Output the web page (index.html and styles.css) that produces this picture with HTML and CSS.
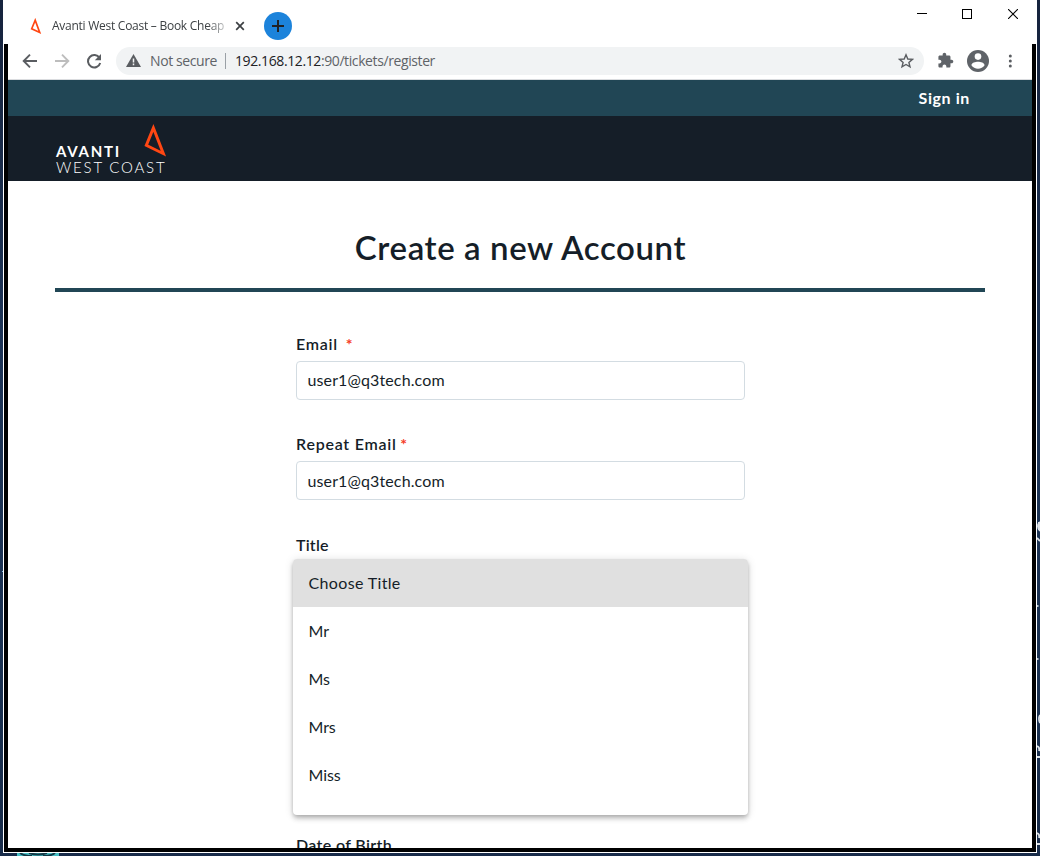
FILE: index.html
```html
<!DOCTYPE html>
<html lang="en">
<head>
<meta charset="utf-8">
<title>Avanti West Coast – Book Cheap Tickets</title>
<link rel="stylesheet" href="styles.css">
</head>
<body>
<div class="desktop">
  <svg class="desk-edge" width="3" height="336" viewBox="0 0 3 336"><g fill="none" stroke="#dde2e8" stroke-width="1.8"><path d="M3 2Q-1 6 3 11M0 18l3 3M3 195Q1 199 3 203M0 226q3 1 2 5M0 237h3M0 313q3 1 2 5M0 324h3"/></g><path fill="#dde2e8" d="M1 2h2v8H1z"/><path fill="#b8c5d2" d="M0 85h1.5v2H0zM0 138h1.5v2H0z"/></svg>
  <span class="spark"></span>
  <svg class="desk-icon" width="42" height="3" viewBox="0 0 42 3"><path fill="#48bfc4" d="M0 0h42v3H0z"/><path d="M3 0c4 3 8 3 12 3M38 0c-4 3-8 3-12 3M12 0q9 3 18 0" fill="none" stroke="#123845" stroke-width="2"/></svg>
  <div class="window">
    <header class="tabstrip">
      <div class="tab">
        <svg class="favicon" width="12" height="16" viewBox="0 0 12 16"><path d="M5.2 2.2 1.7 10.7 9.7 14.4z" fill="none" stroke="#ff4713" stroke-width="1.7"/></svg>
        <span class="tab-title">Avanti West Coast – Book Cheap</span>
        <svg class="tab-close" width="10" height="10" viewBox="0 0 10 10"><path d="M1.2 1.2l7.6 7.6M8.8 1.2 1.2 8.8" stroke="#3c4043" stroke-width="1.7"/></svg>
      </div>
      <div class="new-tab"><svg width="14" height="14" viewBox="0 0 14 14"><path d="M7 1v12M1 7h12" stroke="#202124" stroke-width="2"/></svg></div>
      <div class="controls">
        <svg class="minimize" width="10" height="10" viewBox="0 0 10 10" shape-rendering="crispEdges"><path d="M0 4.5h10" stroke="#000"/></svg>
        <svg width="10" height="10" viewBox="0 0 10 10" shape-rendering="crispEdges"><path d="M.5.5h9v9h-9z" fill="none" stroke="#000"/></svg>
        <svg width="10" height="10" viewBox="0 0 10 10"><path d="M0 0l10 10M10 0 0 10" stroke="#000" stroke-width="1.1"/></svg>
      </div>
    </header>
    <div class="frame">
      <nav class="toolbar">
        <svg class="nav-icon" width="16" height="16" viewBox="0 0 16 16"><path d="M15 8H2M8 1.7 1.7 8 8 14.3" fill="none" stroke="#5a5d61" stroke-width="1.9"/></svg>
        <svg class="nav-icon" width="16" height="16" viewBox="0 0 16 16"><path d="M1 8h13M8 1.7 14.3 8 8 14.3" fill="none" stroke="#bdbdbd" stroke-width="1.9"/></svg>
        <svg class="nav-icon" width="16" height="16" viewBox="0 0 16 16"><path d="M13.5 5A6.2 6.2 0 1 0 14.2 10" fill="none" stroke="#5a5d61" stroke-width="2"/><path d="M15 1v6.2H8.8z" fill="#5a5d61"/></svg>
        <div class="omnibox">
          <svg width="15" height="13" viewBox="0 0 15 13"><path d="M7.5 0 15 13H0z" fill="#5a5d61"/><path d="M7.5 4.5v4M7.5 9.6v1.6" stroke="#f1f3f4" stroke-width="1.5"/></svg>
          <span class="secure">Not secure</span>
          <span class="divider"></span>
          <span class="url">192.168.12.12<span class="path">:90/tickets/register</span></span>
          <svg class="star" width="16" height="16" viewBox="0 0 16 16"><path d="M8 1.8 9.8 6 14.4 6.4 10.9 9.4 12 13.9 8 11.5 4 13.9 5.1 9.4 1.6 6.4 6.2 6z" fill="none" stroke="#5a5d61" stroke-width="1.4"/></svg>
        </div>
        <svg class="puzzle" width="17" height="17" viewBox="0 0 24 24"><path fill="#5f6368" d="M20.5 11H19V7c0-1.1-.9-2-2-2h-4V3.5C13 2.12 11.88 1 10.5 1S8 2.12 8 3.5V5H4c-1.1 0-1.99.9-1.99 2v3.8H3.5c1.49 0 2.7 1.21 2.7 2.7s-1.21 2.7-2.7 2.7H2V20c0 1.1.9 2 2 2h3.8v-1.5c0-1.49 1.21-2.7 2.7-2.7s2.7 1.21 2.7 2.7V22H17c1.1 0 2-.9 2-2v-4h1.5c1.38 0 2.5-1.12 2.5-2.5S21.88 11 20.5 11z"/></svg>
        <svg class="avatar" width="22" height="22" viewBox="0 0 22 22"><circle cx="11" cy="11" r="11" fill="#5f6368"/><circle cx="11" cy="6.6" r="3.3" fill="#fff"/><path d="M4.4 15.2c0-2.4 4.1-3.5 6.6-3.5s6.6 1.1 6.6 3.5a7.9 7.9 0 0 1-13.2 0z" fill="#fff"/></svg>
        <svg class="kebab" width="4" height="14" viewBox="0 0 4 14"><g fill="#5a5d61"><circle cx="2.3" cy="2" r="1.5"/><circle cx="2.3" cy="7" r="1.5"/><circle cx="2.3" cy="12" r="1.5"/></g></svg>
      </nav>
      <div class="signin-bar"><a class="signin">Sign in</a></div>
      <div class="brand-bar">
        <div class="brand">
          <div class="brand-top"><span class="avanti">AVANTI</span><svg width="24" height="34" viewBox="0 0 24 34"><path d="M10.4 4.9 3.3 22.4 20.4 30.7z" fill="none" stroke="#ff4713" stroke-width="2.9"/></svg></div>
          <div class="west">WEST COAST</div>
        </div>
      </div>
      <main class="page">
        <h1 class="heading">Create a new Account</h1>
        <form class="form">
          <div class="field"><label class="label email">Email <b class="star-req">*</b></label><div class="input first">user1@q3tech.com</div></div>
          <div class="field"><label class="label repeat">Repeat Email <b class="star-req">*</b></label><div class="input">user1@q3tech.com</div></div>
          <div class="field"><label class="label title-label">Title</label>
            <div class="menu">
              <div class="option selected">Choose Title</div>
              <div class="option">Mr</div>
              <div class="option">Ms</div>
              <div class="option">Mrs</div>
              <div class="option">Miss</div>
            </div>
          </div>
          <label class="label dob">Date of Birth</label>
        </form>
      </main>
    </div>
  </div>
</div>
</body>
</html>
```
FILE: styles.css
```css
* { box-sizing: border-box; }
body { margin: 0; overflow: hidden; }
svg { display: block; flex: none; }
.desktop { position: relative; width: 1040px; height: 856px; padding: 0 3px 3px; background: linear-gradient(#16233d, #1d3457 40%, #1a3151 80%, #182b49); overflow: hidden; white-space: nowrap; }
.window { position: relative; height: 853px; background: #fff; padding: 0 1px 1px; }
.desk-edge { position: absolute; left: 1037px; top: 520px; }
.spark { position: absolute; left: 2px; top: 571px; width: 1px; height: 1px; background: #83bbe0; }
.desk-icon { position: absolute; left: 17px; top: 853px; }

.tabstrip { display: flex; align-items: center; height: 44px; padding: 8px 14px 0 26px; }
.tab { display: flex; align-items: center; width: 216px; }
.favicon { margin-right: 10px; }
.tab-title { width: 173px; overflow: hidden; font: 12px/16px "Open Sans", sans-serif; letter-spacing: -.26px; color: #3c4043; -webkit-mask-image: linear-gradient(90deg, #000 155px, transparent 180px); mask-image: linear-gradient(90deg, #000 155px, transparent 180px); }
.tab-close { margin-left: 10px; }
.new-tab { display: flex; align-items: center; justify-content: center; width: 28px; height: 28px; margin-left: 18px; border-radius: 50%; background: #1c83db; }
.controls { display: flex; gap: 36px; margin: -25px 4px 0 auto; }
.minimize { margin-right: -1px; }

.frame { height: 808px; border: solid #000; border-width: 0 4px 4px; overflow: hidden; }
.toolbar { display: flex; align-items: center; height: 36px; padding: 0 20px 2px 14px; border-bottom: 1px solid #dadcdf; }
.nav-icon { margin-right: 16px; }
.omnibox { display: flex; flex: none; align-items: center; width: 808px; height: 28px; margin-left: -2px; padding: 0 10px; border-radius: 14px; background: #f1f3f4; font: 14px/20px "Open Sans", sans-serif; color: #202124; }
.secure { width: 67px; margin-left: 9px; color: #5f6368; letter-spacing: -.4px; }
.divider { width: 1px; height: 16px; margin: 0 9px 0 8px; background: #9aa0a6; }
.url { letter-spacing: -.4px; }
.path { color: #5f6368; }
.star { margin-left: auto; }
.puzzle { margin-left: 13px; }
.avatar { margin-left: 13px; }
.kebab { margin-left: 19px; }

.signin-bar { display: flex; align-items: center; justify-content: flex-end; height: 36px; padding: 0 62px 0 0; background: #214655; }
.signin { font: 700 16px/24px Lato, sans-serif; color: #fff; letter-spacing: .6px; }
.brand-bar { height: 65px; padding: 7px 0 0 48px; background: #151e28; color: #fff; }
.brand { width: 120px; font-family: Lato, sans-serif; }
.brand-top { display: flex; height: 35px; }
.avanti { width: 87px; padding-top: 19px; font-size: 15px; line-height: 18px; font-weight: 700; letter-spacing: 1.75px; }
.west { font-size: 15px; line-height: 18px; font-weight: 300; letter-spacing: 1.8px; }

.page { padding: 0 47px; color: #151e28; font-family: Lato, sans-serif; }
.heading { height: 111px; margin: 0; padding: 45px 0 0 1px; border-bottom: 4px solid #214655; text-align: center; font-size: 33px; line-height: 42px; font-weight: 600; letter-spacing: .6px; }
.form { width: 449px; margin: 0 0 0 241px; padding-top: 40px; }
.field { height: 100px; }
.label { display: block; height: 29px; font-size: 16px; line-height: 24px; font-weight: 600; letter-spacing: .75px; }
.star-req { color: #f53b25; font-weight: 700; }
.email .star-req { margin-left: 3px; }
.repeat .star-req { margin-left: -1px; }
.input { height: 39px; padding: 0 10.5px; border: 1px solid #d3dce2; border-radius: 4px; font-size: 16px; line-height: 38px; letter-spacing: .12px; }
.input.first { line-height: 36px; }
.title-label { height: 27px; padding-top: 1px; letter-spacing: .2px; }
.menu { position: relative; z-index: 1; width: 455px; height: 256px; margin-left: -3px; border-radius: 4px; overflow: hidden; background: #fff; box-shadow: 0 2px 4px -1px rgba(0,0,0,.2), 0 4px 5px rgba(0,0,0,.14), 0 1px 10px rgba(0,0,0,.12); }
.option { height: 48px; padding-left: 15.5px; font-size: 16px; line-height: 48px; letter-spacing: -.1px; }
.selected { background: #e0e0e0; letter-spacing: .35px; }
.dob { margin-top: 201px; letter-spacing: .35px; }
```
